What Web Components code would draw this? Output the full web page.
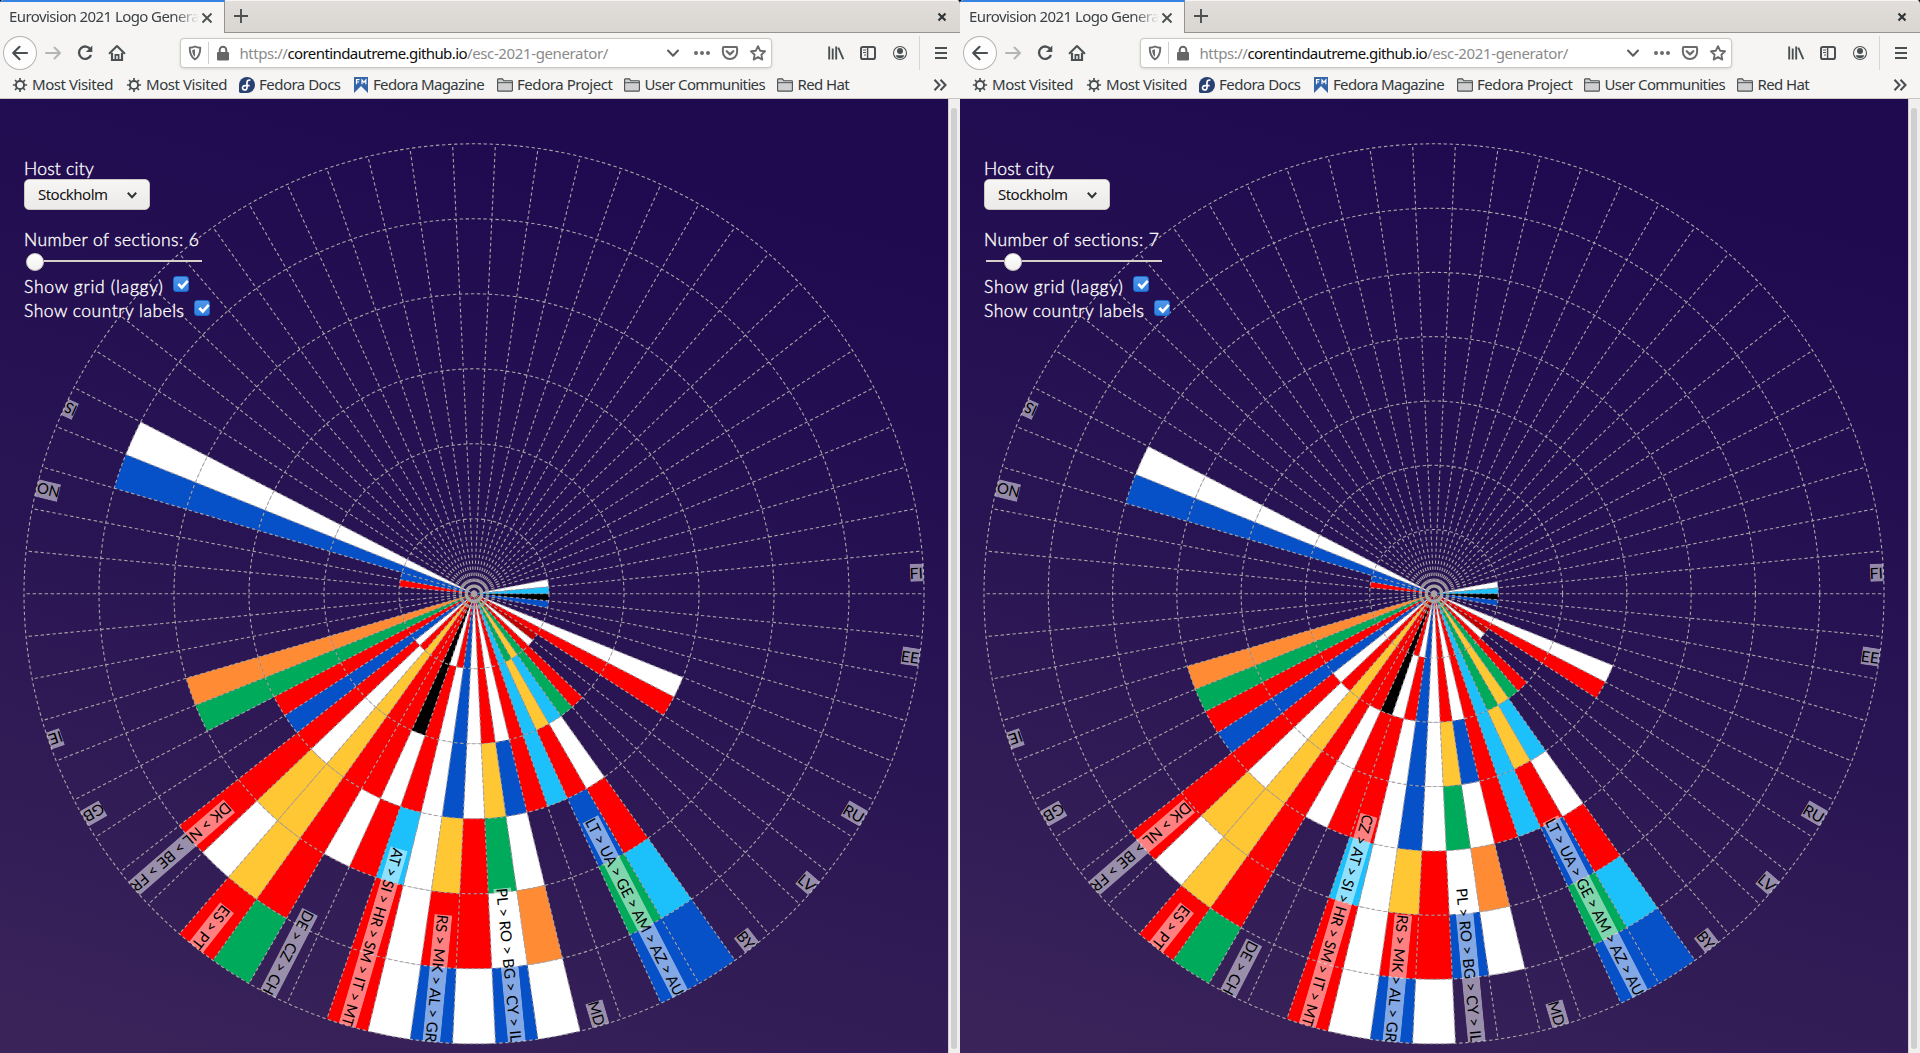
<!DOCTYPE html>
<html lang="en">
<head>
<meta charset="utf-8">
<title>Eurovision 2021 Logo Generator</title>
<style>
html,body{margin:0;height:100%;overflow:hidden;background:#000}
body{font-family:"Noto Sans","Open Sans",sans-serif;font-size:15px}
</style>
</head>
<body>
<split-desktop>
  <browser-window sections="6"></browser-window>
  <browser-window sections="7"></browser-window>
</split-desktop>
<script>
const make = (name, html, setup) => {
  customElements.define(name, class extends HTMLElement {
    connectedCallback() {
      if (this.shadowRoot) return;
      const root = this.attachShadow({ mode: 'open' });
      root.innerHTML = typeof html === 'function' ? html(this) : html;
      if (setup) setup(this, root);
    }
  });
};

/* Text run spread over a fixed width through letter spacing. */
make('fit-text', `<style>:host{display:block;white-space:pre;flex:none}span{display:inline-block}</style><span><slot></slot></span>`,
  (el, root) => {
    const target = +el.getAttribute('w'), s = root.querySelector('span');
    el.style.width = target + 'px';
    const n = el.textContent.length;
    s.style.letterSpacing = ((target - s.getBoundingClientRect().width) / n).toFixed(3) + 'px';
  });

const ICONS = {
  back: [20, 20, '<path d="M17 10H3.5M9.5 3.8 3.2 10l6.3 6.2" fill="none" stroke="#4a5052" stroke-width="2.2" stroke-linecap="round" stroke-linejoin="round"/>'],
  forward: [18, 18, '<path d="M2 9h14M10.500 3.500 16 9l-5.500 5.500" fill="none" stroke="#b4b5b5" stroke-width="2" stroke-linecap="round" stroke-linejoin="round"/>'],
  reload: [18, 18, '<path d="M14.600 5.600A6.200 6.200 0 1 0 15 11" fill="none" stroke="#4a5052" stroke-width="2.300"/><path d="M16.300 1.600V8H9.900Z" fill="#4a5052"/>'],
  home: [18, 18, '<path d="M1.600 9.300 9 2l7.400 7.300" fill="none" stroke="#4a5052" stroke-width="2" stroke-linecap="round" stroke-linejoin="round"/><path d="M4 8.800V16h10V8.800" fill="none" stroke="#4a5052" stroke-width="2.200"/><path d="M7.400 16v-5.200h3.200V16" fill="none" stroke="#4a5052" stroke-width="1.700"/>'],
  shield: [14, 16, '<path d="M7 1.500c1.700.900 3.500 1.200 5.300 1.200 0 5-.800 9-5.300 11.700C2.500 11.700 1.700 7.700 1.700 2.700 3.500 2.700 5.300 2.400 7 1.500Z" fill="none" stroke="#6a6a6a" stroke-width="1.900" stroke-linejoin="round"/><path d="M7 4.300v7.400C4.800 9.900 4.300 7.800 4.200 4.900 5.200 4.800 6 4.700 7 4.300Z" fill="#6a6a6a"/>'],
  lock: [14, 16, '<rect x="1" y="7" width="12" height="8.500" rx="1.200" fill="#666"/><path d="M3.700 8V5a3.300 3.300 0 0 1 6.600 0v3" fill="none" stroke="#666" stroke-width="2"/>'],
  down: [14, 14, '<path d="M2 4.500 7 9.700l5-5.200" fill="none" stroke="#5c5c5c" stroke-width="2" stroke-linecap="round" stroke-linejoin="round"/>'],
  dots: [18, 6, '<circle cx="3" cy="3" r="2" fill="#6a6a6a"/><circle cx="9" cy="3" r="2" fill="#6a6a6a"/><circle cx="15" cy="3" r="2" fill="#6a6a6a"/>'],
  pocket: [18, 16, '<path d="M2.800 2h12.400c.500 0 .9.400.9.900v4a7.100 7.100 0 0 1-14.200 0v-4c0-.5.400-.9.900-.9Z" fill="none" stroke="#6a6a6a" stroke-width="2"/><path d="m5.700 6.200 3.300 3.200 3.300-3.200" fill="none" stroke="#6a6a6a" stroke-width="2.200" stroke-linecap="round" stroke-linejoin="round"/>'],
  star: [18, 18, '<path d="m9 2.200 2.100 4.500 4.900.600-3.600 3.400.9 4.900L9 13.200l-4.300 2.400.9-4.900L2 7.300l4.900-.6Z" fill="none" stroke="#6a6a6a" stroke-width="1.900" stroke-linejoin="round"/>'],
  library: [18, 16, '<path d="M2.200 1.500v13M5.700 3.500v11M9.200 1.500v13M11.300 2.700l5 11.500" fill="none" stroke="#4a5052" stroke-width="1.900"/>'],
  sidebar: [18, 16, '<rect x="2" y="2" width="14" height="12" rx="1.800" fill="none" stroke="#4a5052" stroke-width="2"/><path d="M8.600 2v12" stroke="#4a5052" stroke-width="1.500"/><path d="M4 5h3M4 7.500h3M5 10h2" stroke="#4a5052" stroke-width="1"/>'],
  account: [16, 16, '<circle cx="8" cy="8" r="6.500" fill="none" stroke="#4a5052" stroke-width="1.100"/><circle cx="8" cy="6" r="3" fill="#4a5052"/><path d="M3.700 10.300h8.600c-.4 2-2.300 3-4.300 3s-3.900-1-4.300-3Z" fill="#4a5052"/>'],
  menu: [14, 14, '<path d="M1 2h12M1 7h12M1 12h12" stroke="#4a5052" stroke-width="2"/>'],
  close: [12, 12, '<path d="m1.500 1.500 9 9m0-9-9 9" stroke="#4a5052" stroke-width="1.900"/>'],
  closewin: [10, 10, '<path d="m1.500 1.500 7 7m0-7-7 7" stroke="#2e3436" stroke-width="2.200"/>'],
  plus: [14, 14, '<path d="M7 0v14M0 7h14" stroke="#4a5052" stroke-width="1.900"/>'],
  gear: [16, 16, '<g stroke="#4a5052" stroke-width="2"><circle cx="8" cy="8" r="4.100" fill="none"/><path d="M8 .9v2.600M8 12.500v2.600M.9 8h2.600M12.500 8h2.600M3 3l1.800 1.800M11.200 11.200 13 13M13 3l-1.800 1.800M4.800 11.200 3 13" stroke-width="1.700"/></g>'],
  fedora: [16, 16, '<path d="M8 0a8 8 0 1 1 0 16H1.700A1.700 1.700 0 0 1 0 14.300V8a8 8 0 0 1 8-8Z" fill="#294172"/><path d="M11.400 3.200C9.200 2.600 8 3.700 8 5.600v5c0 1.700-1.200 2.600-2.700 2.300C3.700 12.600 3 10.800 4 9.500c.5-.6 1.200-.9 2-.9h4.600" fill="none" stroke="#fff" stroke-width="1.700"/>'],
  magazine: [14, 16, '<path d="M0 0h14v16L7 9 0 16Z" fill="#3465a8"/><path d="M2.500 7.300V2.700h3M2.500 5h2.600M8 7.300V2.900l1.900 2.400 1.900-2.400v4.400" fill="none" stroke="#fff" stroke-width="1.200"/>'],
  folder: [16, 16, '<path d="M.6 13.500v-11c0-.3.200-.6.600-.6h4.300l1.300 1.900h8c.4 0 .6.200.6.600v9.100c0 .3-.2.600-.6.600H1.200c-.4 0-.6-.3-.6-.6Z" fill="#d0d0d0" stroke="#4a5052" stroke-width="1.100"/><path d="M1 5.700h14" stroke="#4a5052" stroke-width="1"/>'],
  more: [14, 14, '<path d="m1.500 1.800 5 5.200-5 5.200M7.500 1.800l5 5.200-5 5.200" fill="none" stroke="#4a5052" stroke-width="2.100"/>'],
  select: [12, 12, '<path d="M1.800 3.800 6 8.200l4.200-4.400" fill="none" stroke="#2e3436" stroke-width="2"/>'],
  tick: [16, 16, '<path d="m4.300 7 3.500 3.500 6-6.700" fill="none" stroke="#fff" stroke-width="2.700"/>']
};
make('ui-icon', el => {
  const [w, h, body] = ICONS[el.getAttribute('name')];
  return `<style>:host{display:block;flex:none;width:${w}px;height:${h}px}svg{display:block}</style><svg width="${w}" height="${h}" viewBox="0 0 ${w} ${h}">${body}</svg>`;
});

make('tab-strip', `<style>
:host{display:flex;height:33px;background:linear-gradient(#e1dedb,#d9d5d1);box-shadow:inset 0 1px #f6f5f4,inset 0 -1px #95928f;color:#3b4144}
.tab{box-sizing:border-box;width:225px;display:flex;align-items:center;padding:0 11px 0 9px;background:#f6f5f4;border-top:2px solid #3584e4;border-right:1px solid #95928f}
.title{flex:1;width:190px;overflow:hidden;-webkit-mask:linear-gradient(90deg,#000 165px,transparent 190px)}
fit-text{line-height:29px;padding-bottom:2px}
.new{margin:9px 0 0 9px}.win{margin:12px 13px 0 auto}
</style>
<div class="tab"><div class="title"><fit-text w="190">Eurovision 2021 Logo Genera</fit-text></div><ui-icon name="close"></ui-icon></div>
<ui-icon class="new" name="plus"></ui-icon><ui-icon class="win" name="closewin"></ui-icon>`);

make('nav-bar', `<style>
:host{display:flex;align-items:center;height:40px;padding:0 12px 0 3px;background:#f6f5f4}
.back{box-sizing:border-box;width:34px;height:34px;border:1px solid #b5b2af;border-radius:50%;background:#fdfdfd;display:grid;place-items:center}
.url{box-sizing:border-box;display:flex;align-items:center;width:593px;height:30px;margin-left:54px;padding:0 4px 0 7px;background:#fff;border:1px solid #cdc7c2;border-radius:4px;box-shadow:0 1px 3px #0002}
.bar{width:1px;height:22px;background:#d0cdca;margin:0 7px 0 6px}
.addr{display:flex;color:#8b8b8b;margin-left:9.500px;line-height:29px;flex:1}
.addr .host{color:#0c0c0d}
.sep{width:1px;height:34px;background:#d8d6d4;margin:0 14px 0 11px}
</style>
<div class="back"><ui-icon name="back"></ui-icon></div>
<ui-icon name="forward" style="margin-left:7px"></ui-icon><ui-icon name="reload" style="margin-left:14px"></ui-icon><ui-icon name="home" style="margin-left:14px"></ui-icon>
<div class="url"><ui-icon name="shield"></ui-icon><i class="bar"></i><ui-icon name="lock"></ui-icon>
<div class="addr"><fit-text w="48">https://</fit-text><fit-text class="host" w="179.500">corentindautreme.github.io</fit-text><fit-text w="141">/esc-2021-generator/</fit-text></div>
<ui-icon name="down"></ui-icon><ui-icon name="dots" style="margin-left:13px"></ui-icon><ui-icon name="pocket" style="margin-left:10px"></ui-icon><ui-icon name="star" style="margin-left:10px"></ui-icon></div>
<ui-icon name="library" style="margin-left:55px"></ui-icon><ui-icon name="sidebar" style="margin-left:14px"></ui-icon><ui-icon name="account" style="margin-left:15px"></ui-icon><i class="sep"></i><ui-icon name="menu"></ui-icon>`);

make('book-mark', el => `<style>:host{display:flex;align-items:center}fit-text{line-height:22px;padding-bottom:1px;margin-left:${el.getAttribute('gap')}px}</style>
<ui-icon name="${el.getAttribute('icon')}"></ui-icon><fit-text w="${el.getAttribute('w')}">${el.textContent}</fit-text>`);

make('bookmark-bar', `<style>
:host{box-sizing:border-box;display:flex;height:26px;padding:0 13px 2px 12px;background:#f6f5f4;border-bottom:1px solid #cdc7c2;color:#33393b;align-items:center}
ui-icon{margin-left:auto}
</style>
<book-mark icon="gear" gap="4" w="81">Most Visited</book-mark>
<book-mark icon="gear" gap="4" w="81" style="margin-left:13px">Most Visited</book-mark>
<book-mark icon="fedora" gap="4" w="81.500" style="margin-left:12px">Fedora Docs</book-mark>
<book-mark icon="magazine" gap="5.500" w="111" style="margin-left:13px">Fedora Magazine</book-mark>
<book-mark icon="folder" gap="4.500" w="95.500" style="margin-left:12.500px">Fedora Project</book-mark>
<book-mark icon="folder" gap="4.500" w="120.500" style="margin-left:11.500px">User Communities</book-mark>
<book-mark icon="folder" gap="4.500" w="51.500" style="margin-left:12px">Red Hat</book-mark>
<ui-icon name="more"></ui-icon>`);

/* Radial chart: one entry per sector, one letter per ring from the centre out. */
const COLOURS = { w:'#fff', r:'#f00', b:'#0650c8', g:'#00aa5b', y:'#ffc734', o:'#ff8c34', c:'#1cc1fb', k:'#000', d:'#be0000' };
const CHARTS = {
  6: { 64:'w',65:'c',0:'k',1:'b',4:'www',5:'rrr',6:'d',7:'w',8:'rr',9:'gg',10:'ycwrcb',11:'gyrbgb',12:'ccc',13:'rrr',
       14:'wwbwow',15:'rrygwb',16:'wwwrrw',17:'bbbyrb',18:'rwwwww',19:'wrrcrr',20:'kkwr',21:'rrrw',22:'rrrrrg',23:'yyyyyr',
       24:'rwwyw',25:'wrrrr',26:'bbb',27:'rrr',28:'gggg',29:'oooo',34:'r',35:'b',36:'bbbbb',37:'wwwww' },
  7: { 64:'w',65:'c',0:'k',1:'b',4:'www',5:'rrr',6:'d',7:'w',8:'rr',9:'gg',10:'yycwrcb',11:'ggyrbgb',12:'cccc',13:'rrrr',
       14:'wwbwow',15:'rrygwb',16:'wwwwrrw',17:'bbbbyrb',18:'wrwwwww',19:'rwrrcrr',20:'kkrr',21:'rrww',22:'rrrrrrg',23:'yyyyyyr',
       24:'rrwwyw',25:'wwrrrr',26:'bbbb',27:'rrrr',28:'gggg',29:'oooo',34:'r',35:'b',36:'bbbbb',37:'wwwww' }
};
const LABELS = n => [
  [65,'FI',13.500],[1,'EE',18],[5,'RU',21.700],[7,'LV',17.500],[9,'BY',18.700],
  [11,'LT > UA > GE > AM > AZ > AU',196.500],[13,'MD',24.900],[15,'PL > RO > BG > CY > IL',154.300],
  [17,'RS > MK > AL > GR',127.600],
  n === 6 ? [19,'AT > SI > HR > SM > IT > MT',184.200] : [19,'CZ > AT > SI > HR > SM > IT > MT',219.300],
  n === 6 ? [21,'DE > CZ > CH',92.300] : [21,'DE > CH',58],
  [23,'ES > PT',50.700],[25,'DK > NL > BE > FR',126.300],[27,'GB',21.600],[29,'IE',14],[35,'NO',23],[37,'IS',11.800]
];
make('logo-wheel', el => {
  const n = +el.getAttribute('sections'), R = 450, cx = 474, cy = 494.8, step = 2 * Math.PI / 66;
  const pt = (r, a) => (cx + r * Math.cos(a)).toFixed(2) + ' ' + (cy + r * Math.sin(a)).toFixed(2);
  let cells = '', grid = '', labels = '';
  for (const [k, stack] of Object.entries(CHARTS[n])) {
    const a = k * step, b = a + step;
    [...stack].forEach((c, i) => {
      const r0 = R / n * i, r1 = R / n * (i + 1);
      cells += `<path fill="${COLOURS[c]}" d="M${pt(r0, a)}L${pt(r1, a)}A${r1} ${r1} 0 0 1 ${pt(r1, b)}L${pt(r0, b)}${i ? `A${r0} ${r0} 0 0 0 ${pt(r0, a)}` : ''}Z"/>`;
    });
  }
  for (let k = 0; k < 66; k++) grid += `M${cx} ${cy}L${pt(R, k * step)}`;
  for (let i = 1; i <= n; i++) { const r = R / n * i; grid += `M${cx + r} ${cy}A${r} ${r} 0 0 1 ${cx - r} ${cy}A${r} ${r} 0 0 1 ${cx + r} ${cy}`; }
  LABELS(n).forEach(([k, text, len], i) => {
    const short = text.length === 2;
    labels += `<g transform="translate(${cx} ${cy}) rotate(${((k + .5) * 360 / 66).toFixed(3)}) translate(${R - len} 0)"><clipPath id="c${i}"><rect y="-9" width="${len}" height="18"/></clipPath><g clip-path="url(#c${i})"><rect y="-9" width="${len}" height="17.800" fill="#fff" fill-opacity=".5"/><text x="${short ? -.5 : 0}" y="6" textLength="${len + (short ? 0 : .5)}" lengthAdjust="spacingAndGlyphs">${text.replace(/>/g, '&gt;')}</text></g></g>`;
  });
  return `<style>:host{display:block}svg{display:block}text{font:400 15px Lato,"Open Sans",sans-serif;fill:#000}</style>
<svg width="948" height="954">${cells}<path d="${grid}" fill="none" stroke="#a8a4a4" stroke-width="1.100" stroke-dasharray="3.400 2.600"/>${labels}</svg>`;
});

make('check-row', el => `<style>:host{display:flex;height:24px}
fit-text{line-height:25px}.box{box-sizing:border-box;width:16px;height:16px;margin:2px 0 0 9.500px;border:1px solid #1b6acb;border-radius:3px;background:linear-gradient(#4f97ea,#2f7fe0);display:grid;place-items:center}</style>
<fit-text w="${el.getAttribute('w')}">${el.textContent}</fit-text><div class="box"><ui-icon name="tick"></ui-icon></div>`);

make('control-panel', el => {
  const n = +el.getAttribute('sections');
  return `<style>
:host{display:flex;flex-direction:column;align-items:flex-start;font:300 17.500px Lato,"Open Sans",sans-serif;color:#fff;-webkit-text-stroke:.35px #fff}
.label{height:21px;line-height:22px}
.select{box-sizing:border-box;display:flex;align-items:center;justify-content:space-between;width:126px;height:31px;padding:0 11px 0 13px;margin-bottom:19px;border:1px solid #cdc7c2;border-radius:5px;background:linear-gradient(#f6f5f4,#edebe9);font:15px "Noto Sans",sans-serif;color:#111;-webkit-text-stroke:0;line-height:29px}
.slider{display:flex;align-items:center;width:176px;height:22px;margin:0 0 2px 2px}
.slider i{height:2px;background:#d6cfca}
.slider i:first-child{width:${(n - 6) * 18}px}.slider i:last-child{flex:1}
.slider b{box-sizing:border-box;width:18px;height:18px;margin-top:2px;border-radius:50%;border:1px solid #cdc7c2;background:linear-gradient(#fff,#f1f0ef)}
</style>
<fit-text class="label" w="70">Host city</fit-text>
<div class="select"><fit-text w="69.500">Stockholm</fit-text><ui-icon name="select"></ui-icon></div>
<fit-text class="label" w="175.500">Number of sections: ${n}</fit-text>
<div class="slider"><i></i><b></b><i></i></div>
<check-row w="139.500">Show grid (laggy)</check-row>
<check-row w="160.500">Show country labels</check-row>`;
});

make('page-view', el => `<style>
:host{display:flex;height:954px}
.page{position:relative;width:948px;background:linear-gradient(195deg,#1f0a50 12%,#281353 50%,#3a2459)}
control-panel{position:absolute;left:24px;top:59px}
.scroll{box-sizing:border-box;width:12px;padding:9px 3px 4px 2px;background:#f0efee;border-left:1px solid #d5d1cd}
.scroll i{display:block;height:100%;border-radius:3px;background:#cfcfcf}
</style>
<div class="page"><logo-wheel sections="${el.getAttribute('sections')}"></logo-wheel><control-panel sections="${el.getAttribute('sections')}"></control-panel></div>
<div class="scroll"><i></i></div>`);

make('browser-window', el => `<style>:host{display:block;width:960px;height:1053px;overflow:hidden;border-radius:4px 4px 0 0}</style>
<tab-strip></tab-strip><nav-bar></nav-bar><bookmark-bar></bookmark-bar><page-view sections="${el.getAttribute('sections')}"></page-view>`);

make('split-desktop', `<style>:host{display:flex;width:1920px;height:1053px;background:#000}</style><slot></slot>`);
</script>
</body>
</html>
